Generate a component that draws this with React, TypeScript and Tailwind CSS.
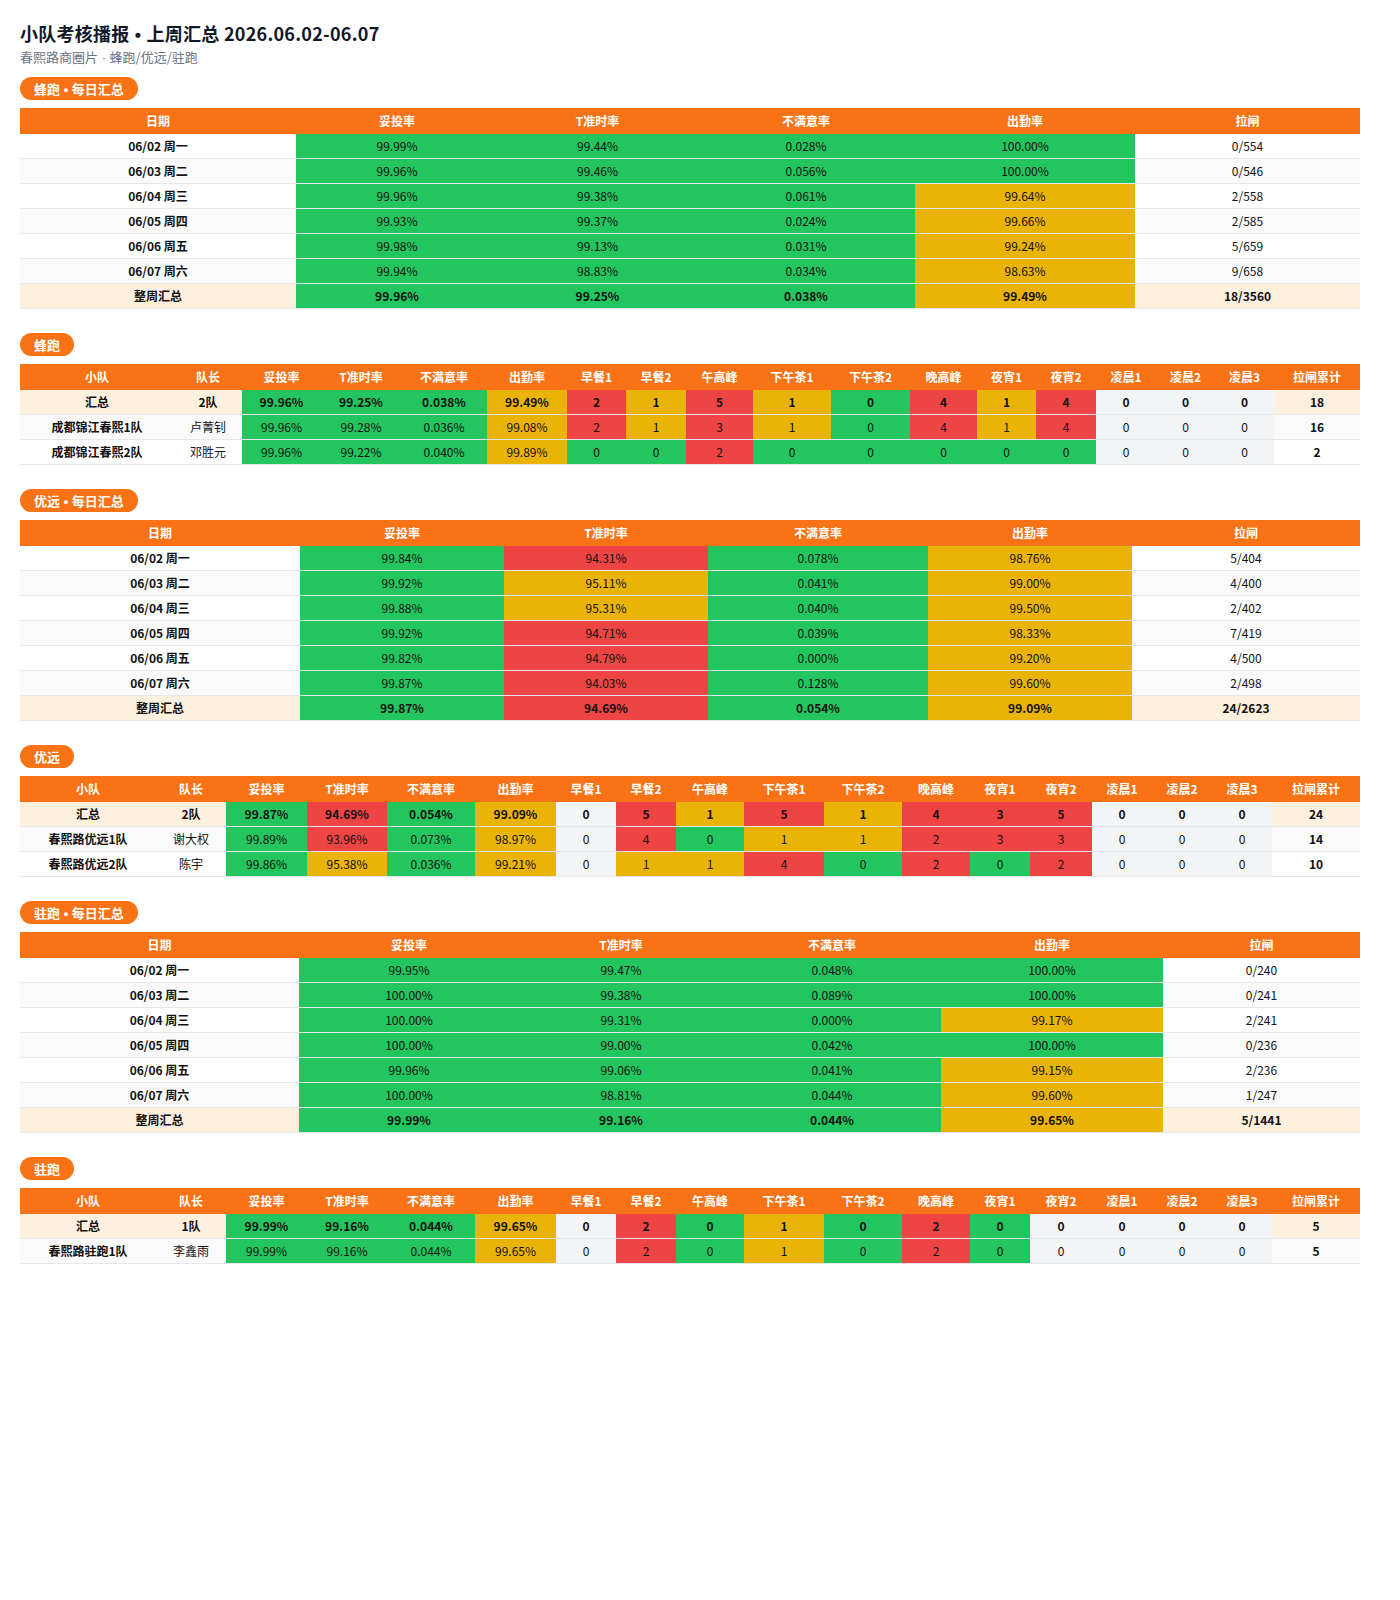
import React from "react";

type Clr = "g" | "y" | "r" | "n" | "x";
const BG: Record<Clr, string> = {
  g: "bg-[#22c55e]",
  y: "bg-[#eab308]",
  r: "bg-[#ef4444]",
  n: "bg-[#f3f4f6]",
  x: "",
};

type DailyRow = { d: string; v: [string, Clr][]; l: string };
type TeamRow = { name: string; lead: string; v: [string, Clr][]; total: string };

const DAILY_COLS = ["日期", "妥投率", "T准时率", "不满意率", "出勤率", "拉闸"];
const TEAM_COLS = [
  "小队", "队长", "妥投率", "T准时率", "不满意率", "出勤率", "早餐1", "早餐2", "午高峰",
  "下午茶1", "下午茶2", "晚高峰", "夜宵1", "夜宵2", "凌晨1", "凌晨2", "凌晨3", "拉闸累计",
];

const W1 = ["w-[276px]", "w-[202px]", "w-[199px]", "w-[218px]", "w-[220px]", "w-[225px]"];
const W3 = ["w-[280px]", "w-[204px]", "w-[204px]", "w-[220px]", "w-[204px]", "w-[228px]"];
const W5 = ["w-[279px]", "w-[220px]", "w-[204px]", "w-[218px]", "w-[222px]", "w-[197px]"];
const WT2 = [
  "w-[154px]", "w-[68px]", "w-[79px]", "w-[80px]", "w-[86px]", "w-[80px]", "w-[59px]", "w-[60px]", "w-[67px]",
  "w-[78px]", "w-[79px]", "w-[67px]", "w-[59px]", "w-[60px]", "w-[60px]", "w-[59px]", "w-[59px]", "w-[86px]",
];
const WT4 = [
  "w-[136px]", "w-[70px]", "w-[81px]", "w-[80px]", "w-[88px]", "w-[81px]", "w-[60px]", "w-[60px]", "w-[68px]",
  "w-[80px]", "w-[78px]", "w-[68px]", "w-[60px]", "w-[62px]", "w-[60px]", "w-[60px]", "w-[60px]", "w-[88px]",
];

const d1: DailyRow[] = [
  { d: "06/02 周一", v: [["99.99%", "g"], ["99.44%", "g"], ["0.028%", "g"], ["100.00%", "g"]], l: "0/554" },
  { d: "06/03 周二", v: [["99.96%", "g"], ["99.46%", "g"], ["0.056%", "g"], ["100.00%", "g"]], l: "0/546" },
  { d: "06/04 周三", v: [["99.96%", "g"], ["99.38%", "g"], ["0.061%", "g"], ["99.64%", "y"]], l: "2/558" },
  { d: "06/05 周四", v: [["99.93%", "g"], ["99.37%", "g"], ["0.024%", "g"], ["99.66%", "y"]], l: "2/585" },
  { d: "06/06 周五", v: [["99.98%", "g"], ["99.13%", "g"], ["0.031%", "g"], ["99.24%", "y"]], l: "5/659" },
  { d: "06/07 周六", v: [["99.94%", "g"], ["98.83%", "g"], ["0.034%", "g"], ["98.63%", "y"]], l: "9/658" },
];
const s1: DailyRow = { d: "整周汇总", v: [["99.96%", "g"], ["99.25%", "g"], ["0.038%", "g"], ["99.49%", "y"]], l: "18/3560" };

const d3: DailyRow[] = [
  { d: "06/02 周一", v: [["99.84%", "g"], ["94.31%", "r"], ["0.078%", "g"], ["98.76%", "y"]], l: "5/404" },
  { d: "06/03 周二", v: [["99.92%", "g"], ["95.11%", "y"], ["0.041%", "g"], ["99.00%", "y"]], l: "4/400" },
  { d: "06/04 周三", v: [["99.88%", "g"], ["95.31%", "y"], ["0.040%", "g"], ["99.50%", "y"]], l: "2/402" },
  { d: "06/05 周四", v: [["99.92%", "g"], ["94.71%", "r"], ["0.039%", "g"], ["98.33%", "y"]], l: "7/419" },
  { d: "06/06 周五", v: [["99.82%", "g"], ["94.79%", "r"], ["0.000%", "g"], ["99.20%", "y"]], l: "4/500" },
  { d: "06/07 周六", v: [["99.87%", "g"], ["94.03%", "r"], ["0.128%", "g"], ["99.60%", "y"]], l: "2/498" },
];
const s3: DailyRow = { d: "整周汇总", v: [["99.87%", "g"], ["94.69%", "r"], ["0.054%", "g"], ["99.09%", "y"]], l: "24/2623" };

const d5: DailyRow[] = [
  { d: "06/02 周一", v: [["99.95%", "g"], ["99.47%", "g"], ["0.048%", "g"], ["100.00%", "g"]], l: "0/240" },
  { d: "06/03 周二", v: [["100.00%", "g"], ["99.38%", "g"], ["0.089%", "g"], ["100.00%", "g"]], l: "0/241" },
  { d: "06/04 周三", v: [["100.00%", "g"], ["99.31%", "g"], ["0.000%", "g"], ["99.17%", "y"]], l: "2/241" },
  { d: "06/05 周四", v: [["100.00%", "g"], ["99.00%", "g"], ["0.042%", "g"], ["100.00%", "g"]], l: "0/236" },
  { d: "06/06 周五", v: [["99.96%", "g"], ["99.06%", "g"], ["0.041%", "g"], ["99.15%", "y"]], l: "2/236" },
  { d: "06/07 周六", v: [["100.00%", "g"], ["98.81%", "g"], ["0.044%", "g"], ["99.60%", "y"]], l: "1/247" },
];
const s5: DailyRow = { d: "整周汇总", v: [["99.99%", "g"], ["99.16%", "g"], ["0.044%", "g"], ["99.65%", "y"]], l: "5/1441" };

const N: [string, Clr][] = [["0", "n"], ["0", "n"], ["0", "n"]];

const t2sum: TeamRow = {
  name: "汇总", lead: "2队",
  v: [["99.96%", "g"], ["99.25%", "g"], ["0.038%", "g"], ["99.49%", "y"], ["2", "r"], ["1", "y"], ["5", "r"], ["1", "y"], ["0", "g"], ["4", "r"], ["1", "y"], ["4", "r"], ...N],
  total: "18",
};
const t2: TeamRow[] = [
  {
    name: "成都锦江春熙1队", lead: "卢菁钊",
    v: [["99.96%", "g"], ["99.28%", "g"], ["0.036%", "g"], ["99.08%", "y"], ["2", "r"], ["1", "y"], ["3", "r"], ["1", "y"], ["0", "g"], ["4", "r"], ["1", "y"], ["4", "r"], ...N],
    total: "16",
  },
  {
    name: "成都锦江春熙2队", lead: "邓胜元",
    v: [["99.96%", "g"], ["99.22%", "g"], ["0.040%", "g"], ["99.89%", "y"], ["0", "g"], ["0", "g"], ["2", "r"], ["0", "g"], ["0", "g"], ["0", "g"], ["0", "g"], ["0", "g"], ...N],
    total: "2",
  },
];

const t4sum: TeamRow = {
  name: "汇总", lead: "2队",
  v: [["99.87%", "g"], ["94.69%", "r"], ["0.054%", "g"], ["99.09%", "y"], ["0", "n"], ["5", "r"], ["1", "y"], ["5", "r"], ["1", "y"], ["4", "r"], ["3", "r"], ["5", "r"], ...N],
  total: "24",
};
const t4: TeamRow[] = [
  {
    name: "春熙路优远1队", lead: "谢大权",
    v: [["99.89%", "g"], ["93.96%", "r"], ["0.073%", "g"], ["98.97%", "y"], ["0", "n"], ["4", "r"], ["0", "g"], ["1", "y"], ["1", "y"], ["2", "r"], ["3", "r"], ["3", "r"], ...N],
    total: "14",
  },
  {
    name: "春熙路优远2队", lead: "陈宇",
    v: [["99.86%", "g"], ["95.38%", "y"], ["0.036%", "g"], ["99.21%", "y"], ["0", "n"], ["1", "y"], ["1", "y"], ["4", "r"], ["0", "g"], ["2", "r"], ["0", "g"], ["2", "r"], ...N],
    total: "10",
  },
];

const t6sum: TeamRow = {
  name: "汇总", lead: "1队",
  v: [["99.99%", "g"], ["99.16%", "g"], ["0.044%", "g"], ["99.65%", "y"], ["0", "n"], ["2", "r"], ["0", "g"], ["1", "y"], ["0", "g"], ["2", "r"], ["0", "g"], ["0", "n"], ...N],
  total: "5",
};
const t6: TeamRow[] = [
  {
    name: "春熙路驻跑1队", lead: "李鑫雨",
    v: [["99.99%", "g"], ["99.16%", "g"], ["0.044%", "g"], ["99.65%", "y"], ["0", "n"], ["2", "r"], ["0", "g"], ["1", "y"], ["0", "g"], ["2", "r"], ["0", "g"], ["0", "n"], ...N],
    total: "5",
  },
];

const CREAM = "bg-[#fdf0de]";
const STRIPE = "bg-[#fafafa]";
const TD = "h-[25px] p-0 text-center align-middle border-b border-[#e5e7eb] leading-[16px]";

function Dot({ big }: { big?: boolean }) {
  return <span className="font-['Liberation_Sans'] leading-none">{big ? " • " : " · "}</span>;
}

function Badge({ a, b }: { a: string; b?: string }) {
  return (
    <div className="flex">
      <span className="inline-flex h-[23px] items-center rounded-full bg-[#f97316] px-[14px] text-[13px] font-bold text-white">
        <span className="whitespace-pre">
          {a}
          {b ? (
            <>
              <Dot big />
              {b}
            </>
          ) : null}
        </span>
      </span>
    </div>
  );
}

function Head({ cols, widths }: { cols: string[]; widths: string[] }) {
  return (
    <>
      <colgroup>
        {widths.map((w, i) => (
          <col key={i} className={w} />
        ))}
      </colgroup>
      <thead>
        <tr>
          {cols.map((c) => (
            <th key={c} className="h-[26px] bg-[#f97316] p-0 text-center align-middle text-[12px] font-bold text-white">
              {c}
            </th>
          ))}
        </tr>
      </thead>
    </>
  );
}

function DailyTable({ rows, sum, widths }: { rows: DailyRow[]; sum: DailyRow; widths: string[] }) {
  return (
    <table className="mt-2 w-[1340px] table-fixed border-separate border-spacing-0 text-[12px] text-[#111]">
      <Head cols={DAILY_COLS} widths={widths} />
      <tbody>
        {rows.map((r, i) => (
          <tr key={r.d} className={i % 2 === 1 ? STRIPE : "bg-white"}>
            <td className={`${TD} font-bold`}>{r.d}</td>
            {r.v.map(([t, c], j) => (
              <td key={j} className={`${TD} ${BG[c]}`}>{t}</td>
            ))}
            <td className={TD}>{r.l}</td>
          </tr>
        ))}
        <tr className={CREAM}>
          <td className={`${TD} font-bold`}>{sum.d}</td>
          {sum.v.map(([t, c], j) => (
            <td key={j} className={`${TD} ${BG[c]} font-bold`}>{t}</td>
          ))}
          <td className={`${TD} font-bold`}>{sum.l}</td>
        </tr>
      </tbody>
    </table>
  );
}

function TeamTable({ sum, rows, widths }: { sum: TeamRow; rows: TeamRow[]; widths: string[] }) {
  return (
    <table className="mt-2 w-[1340px] table-fixed border-separate border-spacing-0 text-[12px] text-[#111]">
      <Head cols={TEAM_COLS} widths={widths} />
      <tbody>
        <tr className={CREAM}>
          <td className={`${TD} font-bold`}>{sum.name}</td>
          <td className={`${TD} font-bold`}>{sum.lead}</td>
          {sum.v.map(([t, c], j) => (
            <td key={j} className={`${TD} ${BG[c]} font-bold`}>{t}</td>
          ))}
          <td className={`${TD} font-bold`}>{sum.total}</td>
        </tr>
        {rows.map((r, i) => (
          <tr key={r.name} className={i % 2 === 0 ? STRIPE : "bg-white"}>
            <td className={`${TD} font-bold`}>{r.name}</td>
            <td className={TD}>{r.lead}</td>
            {r.v.map(([t, c], j) => (
              <td key={j} className={`${TD} ${BG[c]}`}>{t}</td>
            ))}
            <td className={`${TD} font-bold`}>{r.total}</td>
          </tr>
        ))}
      </tbody>
    </table>
  );
}

export default function App() {
  return (
    <div
      className="min-h-[1600px] bg-white px-5 pt-5 pb-10 text-[#111827]"
      style={{ fontFamily: '"Noto Sans CJK SC", "Noto Sans", sans-serif' }}
    >
      <h1 className="h-[26px] text-[18px] font-bold leading-[26px] tracking-[0.25px] text-[#111827]">
        小队考核播报
        <Dot big />
        上周汇总 2026.06.02-06.07
      </h1>
      <div className="mt-[2px] h-[18px] text-[13px] leading-[18px] text-[#6b7280]">
        春熙路商圈片
        <Dot />
        蜂跑/优远/驻跑
      </div>

      <div className="mt-[11px]">
        <Badge a="蜂跑" b="每日汇总" />
        <DailyTable rows={d1} sum={s1} widths={W1} />
      </div>
      <div className="mt-6">
        <Badge a="蜂跑" />
        <TeamTable sum={t2sum} rows={t2} widths={WT2} />
      </div>
      <div className="mt-6">
        <Badge a="优远" b="每日汇总" />
        <DailyTable rows={d3} sum={s3} widths={W3} />
      </div>
      <div className="mt-6">
        <Badge a="优远" />
        <TeamTable sum={t4sum} rows={t4} widths={WT4} />
      </div>
      <div className="mt-6">
        <Badge a="驻跑" b="每日汇总" />
        <DailyTable rows={d5} sum={s5} widths={W5} />
      </div>
      <div className="mt-6">
        <Badge a="驻跑" />
        <TeamTable sum={t6sum} rows={t6} widths={WT4} />
      </div>
    </div>
  );
}
